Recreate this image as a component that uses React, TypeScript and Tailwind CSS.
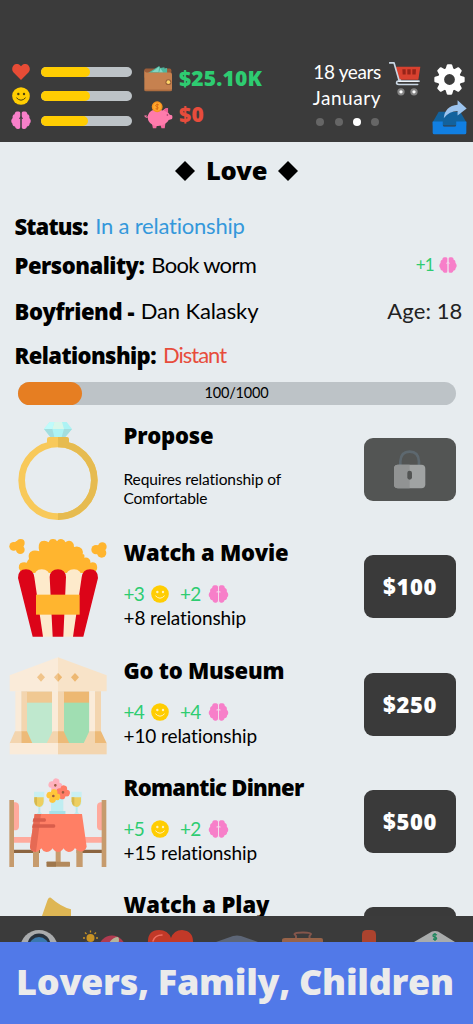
import type { ReactNode } from 'react';

const Brain = ({ className, line }: { className: string; line: string }) => (
  <svg viewBox="0 0 60 54" className={className}>
    <g fill="#f77fc9">
      <path d="M28.500 5C27 1 22 0 18 1C13 2 11 5 11 9C6 10 4 15 5 20C0 24-1 33 4 37C4 43 8 46 12 46C13 51 17 54 22 53C26 53 28.500 50 28.500 46Z" />
      <path d="M31.500 5C33 1 38 0 42 1C47 2 49 5 49 9C54 10 56 15 55 20C60 24 61 33 56 37C56 43 52 46 48 46C47 51 43 54 38 53C34 53 31.500 50 31.500 46Z" />
    </g>
    <path d="M30 0V54M24 21Q30 23 30 16Q30 23 36 21" stroke={line} strokeWidth="3" fill="none" />
  </svg>
);

const Smile = ({ className, line }: { className: string; line: string }) => (
  <svg viewBox="0 0 54 54" className={className}>
    <circle cx="27" cy="27" r="26.5" fill="#ffcd02" />
    <circle cx="19" cy="21" r="3.6" fill={line} />
    <circle cx="36" cy="21" r="3.6" fill={line} />
    <path d="M14 33Q27 47 40 33" stroke={line} strokeWidth="3" fill="none" strokeLinecap="round" />
  </svg>
);

const Heart = () => (
  <svg viewBox="0 0 54 48" className="h-4 w-[18px]">
    <path d="M27 48L4 25C-8 8 14-11 27 7C40-11 62 8 50 25Z" fill="#e74c36" />
  </svg>
);

const Wallet = () => (
  <svg viewBox="0 0 88 80" className="h-[27px] w-[29px]">
    <rect x="1" y="10" width="82" height="30" rx="5" fill="#9b5c38" />
    <path d="M12 23L46 2L50 8L62 6L62 10L70 8V24Z" fill="#4fb9a0" />
    <path d="M24 20L46 4L44 20ZM50 9L58 22H46Z" fill="#82d6c3" />
    <path d="M1 14Q2 22 12 22H78Q85 22 85 28V72Q85 78 79 78H6Q1 78 1 72Z" fill="#c6814f" />
    <path d="M1 73H85Q85 79 79 79H6Q1 79 1 73Z" fill="#ad6d40" />
    <circle cx="74" cy="51" r="9" fill="#99603a" />
    <circle cx="74" cy="51" r="5.5" fill="#ffd568" />
  </svg>
);

const Piggy = () => (
  <svg viewBox="0 0 88 84" className="h-7 w-[29px]">
    <path d="M12 48Q3 52 3 43M3 47Q8 41 9 47" stroke="#ff7bac" strokeWidth="3" fill="none" />
    <path d="M24 68L27 82H37L40 70ZM50 72L53 82H63L65 66Z" fill="#f46a9e" />
    <path d="M72 34V21Q64 21 57 28Q20 18 12 43Q9 66 27 72Q44 80 62 70Q72 64 75 57L85 54Q88 48 85 43L78 41Q75 36 72 34Z" fill="#ff7bac" />
    <path d="M73 35V21Q63 22 60 28Z" fill="#ef5f95" />
    <circle cx="71" cy="42" r="2.5" fill="#94375e" />
    <circle cx="40" cy="17" r="16.5" fill="#f7931e" />
    <circle cx="40" cy="17" r="12" fill="#ffa92e" />
    <path d="M45 11Q36 8 35 14Q38 17 42 18Q45 25 35 23M40 7V27" stroke="#d96a12" strokeWidth="3" fill="none" />
  </svg>
);

const Cart = () => (
  <svg viewBox="0 0 96 104" className="h-[35px] w-8">
    <path d="M18 17H94L88 56H30Z" fill="#d8412f" />
    <path d="M40 24h10v16h-9zM55 24h10v16H55zM70 24h11l-1 16H70z" fill="#962419" />
    <path d="M2 5H15L31 60H90M34 57L24 61Q20 70 30 70H86" stroke="#c9d6e3" strokeWidth="5" fill="none" strokeLinecap="round" strokeLinejoin="round" />
    <path d="M28 61H88" stroke="#eef3f8" strokeWidth="3" />
    <g fill="#fff" stroke="#858585" strokeWidth="6">
      <circle cx="36" cy="92" r="8" />
      <circle cx="75" cy="92" r="8" />
    </g>
  </svg>
);

const Gear = () => (
  <svg viewBox="-46 -46 92 92" className="size-[31px]">
    <circle r="25" fill="none" stroke="#fff" strokeWidth="18" />
    {[0, 45, 90, 135, 180, 225, 270, 315].map((a) => (
      <path key={a} d="M-12-30L-8-43Q-7-45-5-45H5Q7-45 8-43L12-30Z" fill="#fff" transform={`rotate(${a})`} />
    ))}
  </svg>
);

const Share = () => (
  <svg viewBox="0 0 104 104" className="h-[35px] w-[35px]">
    <path d="M20 35H84L102 66V76H2V66Z" fill="#12629d" />
    <path d="M2 64H32V74Q32 79 37 79H67Q72 79 72 74V64H102V97Q102 102 97 102H7Q2 102 2 97Z" fill="#117fe2" />
    <path d="M35 54Q38 18 76 14V1L103 25L76 46V33Q52 33 35 54Z" fill="#9cc4ee" />
  </svg>
);

const Ring = () => (
  <svg viewBox="0 3 342 352" className="h-[117.33px] w-[114px] shrink-0">
    <circle cx="174" cy="211" r="109" fill="none" stroke="#f8c95a" strokeWidth="20" />
    <path d="M174 102A109 109 0 0 1 174 320" fill="none" stroke="#e6bb50" strokeWidth="20" />
    <path d="M141 103V87Q141 81 148 81H174V110H150Z" fill="#f8c95a" />
    <path d="M174 81H201Q207 81 207 87V103L198 110H174Z" fill="#e6bb50" />
    <path d="M149 36H200L216 57L196 81H151L132 57Z" fill="#adf3f4" />
    <path d="M163 36H186L192 57H157Z" fill="#d9f7ea" />
    <path d="M132 57H157L163 81H151ZM192 57H216L196 81H185Z" fill="#a3dedf" />
    <path d="M149 36H163L157 57H132Z" fill="#c0fbfb" />
  </svg>
);

const Popcorn = () => (
  <svg viewBox="0 -5 342 352" className="h-[117.33px] w-[114px] shrink-0">
    <g fill="#ffb52f">
      <path d="M65 130Q50 112 61 101Q70 96 80 99Q83 91 87 88Q82 68 98 63Q108 61 118 65Q112 43 124 35Q136 30 146 38Q149 27 160 28Q168 28 171 35Q177 26 187 29Q195 32 196 38Q205 29 216 36Q224 43 222 52Q237 47 246 58Q250 66 248 74Q255 71 253 84Q267 81 271 94V99Q287 95 291 108Q294 121 282 130Z" />
      <circle cx="41" cy="50" r="13" /><circle cx="62" cy="40" r="12" /><circle cx="61" cy="60" r="13" /><circle cx="55" cy="48" r="15" />
      <circle cx="288" cy="60" r="14" /><circle cx="307" cy="51" r="13" /><circle cx="305" cy="70" r="14" /><circle cx="301" cy="60" r="15" />
    </g>
    <path d="M102 145Q103 119 125 119Q148 119 150 142L158 321H128ZM197 142Q199 119 222 119Q244 119 246 145L220 321H190Z" fill="#fdeacb" />
    <path d="M54 145Q54 119 78 119Q100 119 103 143L129 321H98ZM149 142Q151 119 174 119Q196 119 198 142L190 321H158ZM245 143Q248 119 270 119Q294 119 294 145L250 321H219Z" fill="#dc0418" />
    <rect x="108" y="195" width="131" height="60" fill="#ffb52f" />
  </svg>
);

const Museum = () => (
  <svg viewBox="0 2 342 352" className="h-[117.33px] w-[114px] shrink-0">
    <rect x="80" y="138" width="76" height="35" fill="#f0c892" />
    <rect x="191" y="138" width="77" height="35" fill="#edb872" />
    <rect x="80" y="172" width="76" height="122" fill="#bfe8ce" />
    <rect x="191" y="172" width="77" height="122" fill="#a0deb2" />
    <path d="M29 90L174 36V138H29Z" fill="#faebd9" />
    <path d="M174 36L320 90V138H174Z" fill="#f8e3c8" />
    <path d="M46 138h18V260H46zM156 138h18V260h-18zM268 138h17V260h-17z" fill="#faebd9" />
    <path d="M64 138h17V260H64zM174 138h18V260h-18zM285 138h18V260h-18z" fill="#f3d5af" />
    <path d="M45 258H64V294H29ZM158 258H174V294H140ZM268 258H285V294H251Z" fill="#f3d5af" />
    <path d="M64 258H81L97 294H64ZM174 258H191L208 294H174ZM285 258H303L320 294H285Z" fill="#edba78" />
    <rect x="29" y="293" width="145" height="34" fill="#faebd9" />
    <rect x="174" y="293" width="146" height="34" fill="#f3d5af" />
    <path d="M123 83L135 96L123 109L111 96ZM174 83L186 96L174 109L162 96Z" fill="#f0c48b" />
    <path d="M225 83L237 96L225 109L213 96ZM174 83L186 96L174 109Z" fill="#edb872" />
  </svg>
);

const Glass = ({ x }: { x: number }) => (
  <g transform={`translate(${x} 80)`}>
    <path d="M0 0H31V28Q31 45 16 48Q0 45 0 28Z" fill="#c9eff2" />
    <path d="M1 17H29V29Q28 45 16 46Q1 44 1 29Z" fill="#edcf60" />
    <path d="M1 17H9V43Q1 38 1 29Z" fill="#d7b84e" />
    <path d="M13 47H19V62L25 66H8L13 62Z" fill="#b9e9ed" />
  </g>
);

const Flower = ({ x, y, c }: { x: number; y: number; c: string }) => (
  <g transform={`translate(${x} ${y}) rotate(12)`} fill={c}>
    <circle cx="0" cy="-11" r="10" /><circle cx="11" cy="0" r="10" /><circle cx="0" cy="11" r="10" /><circle cx="-11" cy="0" r="10" />
    <circle r="4" fill="#9d5b40" />
  </g>
);

const Dinner = () => (
  <svg viewBox="0 -6 342 352" className="h-[117.33px] w-[114px] shrink-0">
    <path d="M40 112H47Q57 114 57 124V184Q57 195 47 196H40ZM307 112H301Q291 114 291 124V184Q291 195 301 196H307ZM40 216H100V233H40ZM250 216H307V233H250Z" fill="#ffaa9d" />
    <path d="M40 254H120V264H40ZM230 254H307V264H230Z" fill="#8b6440" />
    <path d="M28 105H42V306H28ZM305 105H319V306H305ZM99 255H117V306H99ZM229 255H248V306H229ZM167 255H182V292H167Z" fill="#c69b6d" />
    <rect x="140" y="290" width="70" height="15" rx="2" fill="#b38a5d" />
    <path d="M140 290H168V305H140Z" fill="#9e774d" />
    <Glass x={102} /><Glass x={214} />
    <path d="M153 98H190V138H196V147H148V138H153Z" fill="#bfedf1" />
    <path d="M148 138H196V147H148Z" fill="#a6e1e8" />
    <Flower x={166} y={61} c="#ffb1bd" /><Flower x={189} y={82} c="#ff7d67" /><Flower x={160} y={93} c="#ffc63a" />
    <path d="M104 147H246L260 245Q256 259 241 260Q230 258 225 249Q218 261 206 261Q196 260 191 250Q184 261 173 261Q163 260 158 250Q151 261 139 261Q128 259 124 250Q116 261 105 261Q91 258 90 245Z" fill="#ff7f65" />
    <path d="M104 147H123L108 261Q91 260 90 245Z" fill="#e66a54" />
    <path d="M100 160H134Q138 160 138 165Q138 170 134 170H98ZM98 178H162Q166 178 166 183Q166 188 162 188H96Z" fill="#d95d4b" />
  </svg>
);

const Play = () => (
  <svg viewBox="0 1 342 352" className="h-[117.33px] w-[114px] shrink-0">
    <path d="M120 130L143 64Q148 53 156 61Q182 84 213 93V140Z" transform="translate(0 -4)" fill="#deb654" />
  </svg>
);

const Lock = () => (
  <svg viewBox="0 0 94 116" className="h-[38.7px] w-[31.3px]">
    <path d="M19 48V34Q21 5 47 5Q73 5 75 34V48" fill="none" stroke="#5d686f" strokeWidth="8" />
    <rect x="0" y="44" width="94" height="71" rx="12" fill="#a0a3a3" />
    <path d="M47 44H12Q0 44 0 56V103Q0 115 12 115H47Z" fill="#919393" />
    <rect x="40" y="62" width="14" height="27" rx="7" fill="#525453" />
  </svg>
);

const Diamond = () => (
  <svg viewBox="0 0 20 20" className="size-5"><path d="M10 0L20 10L10 20L0 10Z" /></svg>
);

const Strong = ({ children, track }: { children: ReactNode; track: string }) => (
  <b className={`font-['Open_Sans',sans-serif] font-extrabold ${track}`}>{children}</b>
);

const StatBar = ({ icon, fill }: { icon: ReactNode; fill: string }) => (
  <div className="flex h-[24.3px] items-center">
    <div className="flex w-[21px] justify-center">{icon}</div>
    <div className="ml-2.5 h-2.5 w-[91px] rounded-full bg-[#bdc3c7]">
      <div className={`h-full rounded-full bg-[#ffcd02] ${fill}`} />
    </div>
  </div>
);

const Item = ({ art, title, track, children, button }: { art: ReactNode; title: string; track: string; children?: ReactNode; button: ReactNode }) => (
  <div className="flex h-[117.33px] shrink-0">
    {art}
    <div className="ml-[9.5px] flex-1 pt-[13px] whitespace-nowrap">
      <h2 className="text-[22px] leading-[22px]"><Strong track={track}>{title}</Strong></h2>
      {children}
    </div>
    {button}
  </div>
);

const Price = ({ children, tone = 'bg-[#3a3a3a]' }: { children?: ReactNode; tone?: string }) => (
  <button className={`mr-[17px] flex h-[63px] w-[92px] shrink-0 items-center justify-center self-center rounded-[9px] pb-px font-['Open_Sans',sans-serif] text-[22px] leading-none font-extrabold tracking-[0.6px] text-white ${tone}`}>
    {children}
  </button>
);

const Gains = ({ joy, mind, bond }: { joy: string; mind: string; bond: string }) => (
  <>
    <div className="mt-5 flex h-5 items-center text-[19px] leading-5 tracking-[-0.8px] text-[#2ecc71]">
      <span className="w-[27.5px]">{joy}</span>
      <Smile className="size-[18px]" line="#fff3c0" />
      <span className="ml-[11px] w-[27.5px]">{mind}</span>
      <Brain className="h-[18px] w-[21px]" line="#f4dcec" />
    </div>
    <p className="mt-1 text-[19px] leading-5 tracking-[-0.1px]">{bond}</p>
  </>
);

const NavCell = ({ children }: { children: ReactNode }) => (
  <svg viewBox="0 0 66 26" className="h-[26px] w-[66px] shrink-0">{children}</svg>
);

export default function App() {
  return (
    <div className="flex h-[1024px] w-[473px] flex-col overflow-hidden bg-[#e7ecef] font-[Lato,sans-serif] text-black">
      <header className="flex h-[141.5px] shrink-0 bg-[#3b3b3b] pt-[60px] pl-2.5">
        <div className="w-[134px]">
          <StatBar icon={<Heart />} fill="w-[48.5px]" />
          <StatBar icon={<Smile className="size-[18px]" line="#4c4310" />} fill="w-[48.5px]" />
          <StatBar icon={<Brain className="h-[18.5px] w-5" line="#3b3b3b" />} fill="w-[47px]" />
        </div>
        <div className="w-[150px] text-[21px] leading-none">
          <div className="flex h-[37px] items-center gap-1.5 text-[#2ecc71]"><Wallet /><Strong track="tracking-[0.2px]">$25.10K</Strong></div>
          <div className="-mt-px flex h-[37px] items-center gap-1.5 text-[#e74c3c]"><Piggy /><Strong track="tracking-[0.4px]">$0</Strong></div>
        </div>
        <div className="flex w-[87px] flex-col items-end text-[19px] leading-[26px] text-white">
          <span className="-mt-[1.5px] tracking-[-0.35px]">18 years</span>
          <span className="tracking-[0.55px]">January</span>
          <div className="mt-[7.5px] mr-0.5 flex gap-[10.2px]">
            <i className="size-2 rounded-full bg-[#666]" /><i className="size-2 rounded-full bg-[#666]" />
            <i className="size-2 rounded-full bg-white" /><i className="size-2 rounded-full bg-[#666]" />
          </div>
        </div>
        <div className="ml-2 pt-px"><Cart /></div>
        <div className="ml-[11px] flex flex-col items-center gap-[5.5px] pt-[3.5px]"><Gear /><Share /></div>
      </header>

      <main className="flex min-h-0 flex-1 flex-col overflow-hidden">
        <div className="flex h-[59px] shrink-0 items-center justify-center gap-[11px]">
          <Diamond />
          <h1 className="text-[25.5px] leading-none"><Strong track="tracking-[-0.3px]">Love</Strong></h1>
          <Diamond />
        </div>
        <section className="h-[210.5px] shrink-0 px-[14.5px] pt-3.5 text-[22px] leading-[22px] whitespace-nowrap">
          <div className="flex h-[22px] gap-[7.5px]"><Strong track="tracking-[-0.85px]">Status:</Strong><span className="tracking-[-0.2px] text-[#3498db]">In a relationship</span></div>
          <div className="mt-[17px] flex h-[22px] items-center gap-[7px]">
            <Strong track="tracking-[-0.5px]">Personality:</Strong><span className="tracking-[-0.7px]">Book worm</span>
            <span className="ml-auto text-[17px] tracking-[-1px] text-[#2ecc71]">+1</span><Brain className="mr-0.5 -ml-0.5 h-4 w-[18px]" line="#f4dcec" />
          </div>
          <div className="mt-6 flex h-[22px] gap-[6.5px]"><Strong track="tracking-[-0.4px]">Boyfriend -</Strong><span className="tracking-[-0.1px]">Dan Kalasky</span><span className="-mr-1 ml-auto tracking-[0.1px] text-[#222]">Age: 18</span></div>
          <div className="mt-[22px] flex h-[22px] gap-[7px]"><Strong track="tracking-[-0.59px]">Relationship:</Strong><span className="tracking-[-1px] text-[#e74c3c]">Distant</span></div>
          <div className="relative mt-[16.5px] ml-[3px] h-[22.5px] w-[438px] rounded-full bg-[#bdc3c7]">
            <div className="h-full w-[64.5px] rounded-full bg-[#e67e22]" />
            <span className="absolute inset-0 flex items-center justify-center text-[14.5px] leading-none tracking-[-0.2px]">100/1000</span>
          </div>
        </section>
        <Item art={<Ring />} title="Propose" track="tracking-[-0.23px]" button={<Price tone="bg-[#535554]"><Lock /></Price>}>
          <p className="mt-[23px] text-[15.5px] leading-[19px] tracking-[-0.1px]">Requires relationship of<br />Comfortable</p>
        </Item>
        <Item art={<Popcorn />} title="Watch a Movie" track="tracking-[-0.24px]" button={<Price>$100</Price>}><Gains joy="+3" mind="+2" bond="+8 relationship" /></Item>
        <Item art={<Museum />} title="Go to Museum" track="tracking-[-0.24px]" button={<Price>$250</Price>}><Gains joy="+4" mind="+4" bond="+10 relationship" /></Item>
        <Item art={<Dinner />} title="Romantic Dinner" track="tracking-[-0.72px]" button={<Price>$500</Price>}><Gains joy="+5" mind="+2" bond="+15 relationship" /></Item>
        <Item art={<Play />} title="Watch a Play" track="tracking-[-0.05px]" button={<Price />} />
      </main>

      <nav className="flex h-[26px] shrink-0 bg-[#3b3b3b] pl-[5.5px]">
        <NavCell>
          <circle cx="33" cy="33" r="19" fill="#a9abad" /><circle cx="33" cy="29" r="11.5" fill="#26303c" /><circle cx="33" cy="31" r="10" fill="#3a78ad" />
        </NavCell>
        <NavCell>
          <circle cx="18.5" cy="22" r="4" fill="#c99324" />
          <path d="M18.500 14.500V16.500M11 22H13M24 22H26M13 16.500L14.500 18M24 16.500L22.500 18M13 27L14.500 26" stroke="#c99324" strokeWidth="1.300" />
          <circle cx="40" cy="33" r="13.500" fill="#b03b50" />
          <path d="M37 27Q41 21 46 21Q48 23 46 28Z" fill="#b5b599" />
        </NavCell>
        <NavCell>
          <path d="M10 28Q9 14 21 14Q30 14 33 22Q36 14 44 14Q56 15 55 28Z" fill="#c23928" />
          <path d="M15 25Q17 19 24 19" stroke="#f06f62" strokeWidth="1.500" fill="none" strokeLinecap="round" />
        </NavCell>
        <NavCell><path d="M12 26L29 20Q33 19 37 20L54 26Z" fill="#5d6677" /></NavCell>
        <NavCell>
          <path d="M26 22V20L24.500 18Q25 16.500 33 16.500Q41 16.500 41 18L39.500 20V22" fill="none" stroke="#85564b" strokeWidth="2" />
          <path d="M12 26V24Q12 22 15 22H51Q53 22 53 24V26Z" fill="#976349" />
        </NavCell>
        <NavCell><rect x="26" y="14" width="14" height="20" rx="4.500" fill="#ac432e" /></NavCell>
        <NavCell>
          <path d="M12 26L30 15.500Q33 14.500 36 15.500L53 26Z" fill="#a9acac" />
          <path d="M35 19Q31 17 31 20Q32 21 34 21.500Q36 24 31 23M33 17V25" stroke="#21875f" strokeWidth="1.300" fill="none" />
        </NavCell>
      </nav>
      <footer className="flex h-[82px] shrink-0 items-center justify-center bg-[#5179e8] pr-[3px] pb-[3px] text-[36px] leading-none whitespace-nowrap text-[#ebebeb]">
        <Strong track="tracking-[-0.3px]">Lovers, Family, Children</Strong>
      </footer>
    </div>
  );
}
